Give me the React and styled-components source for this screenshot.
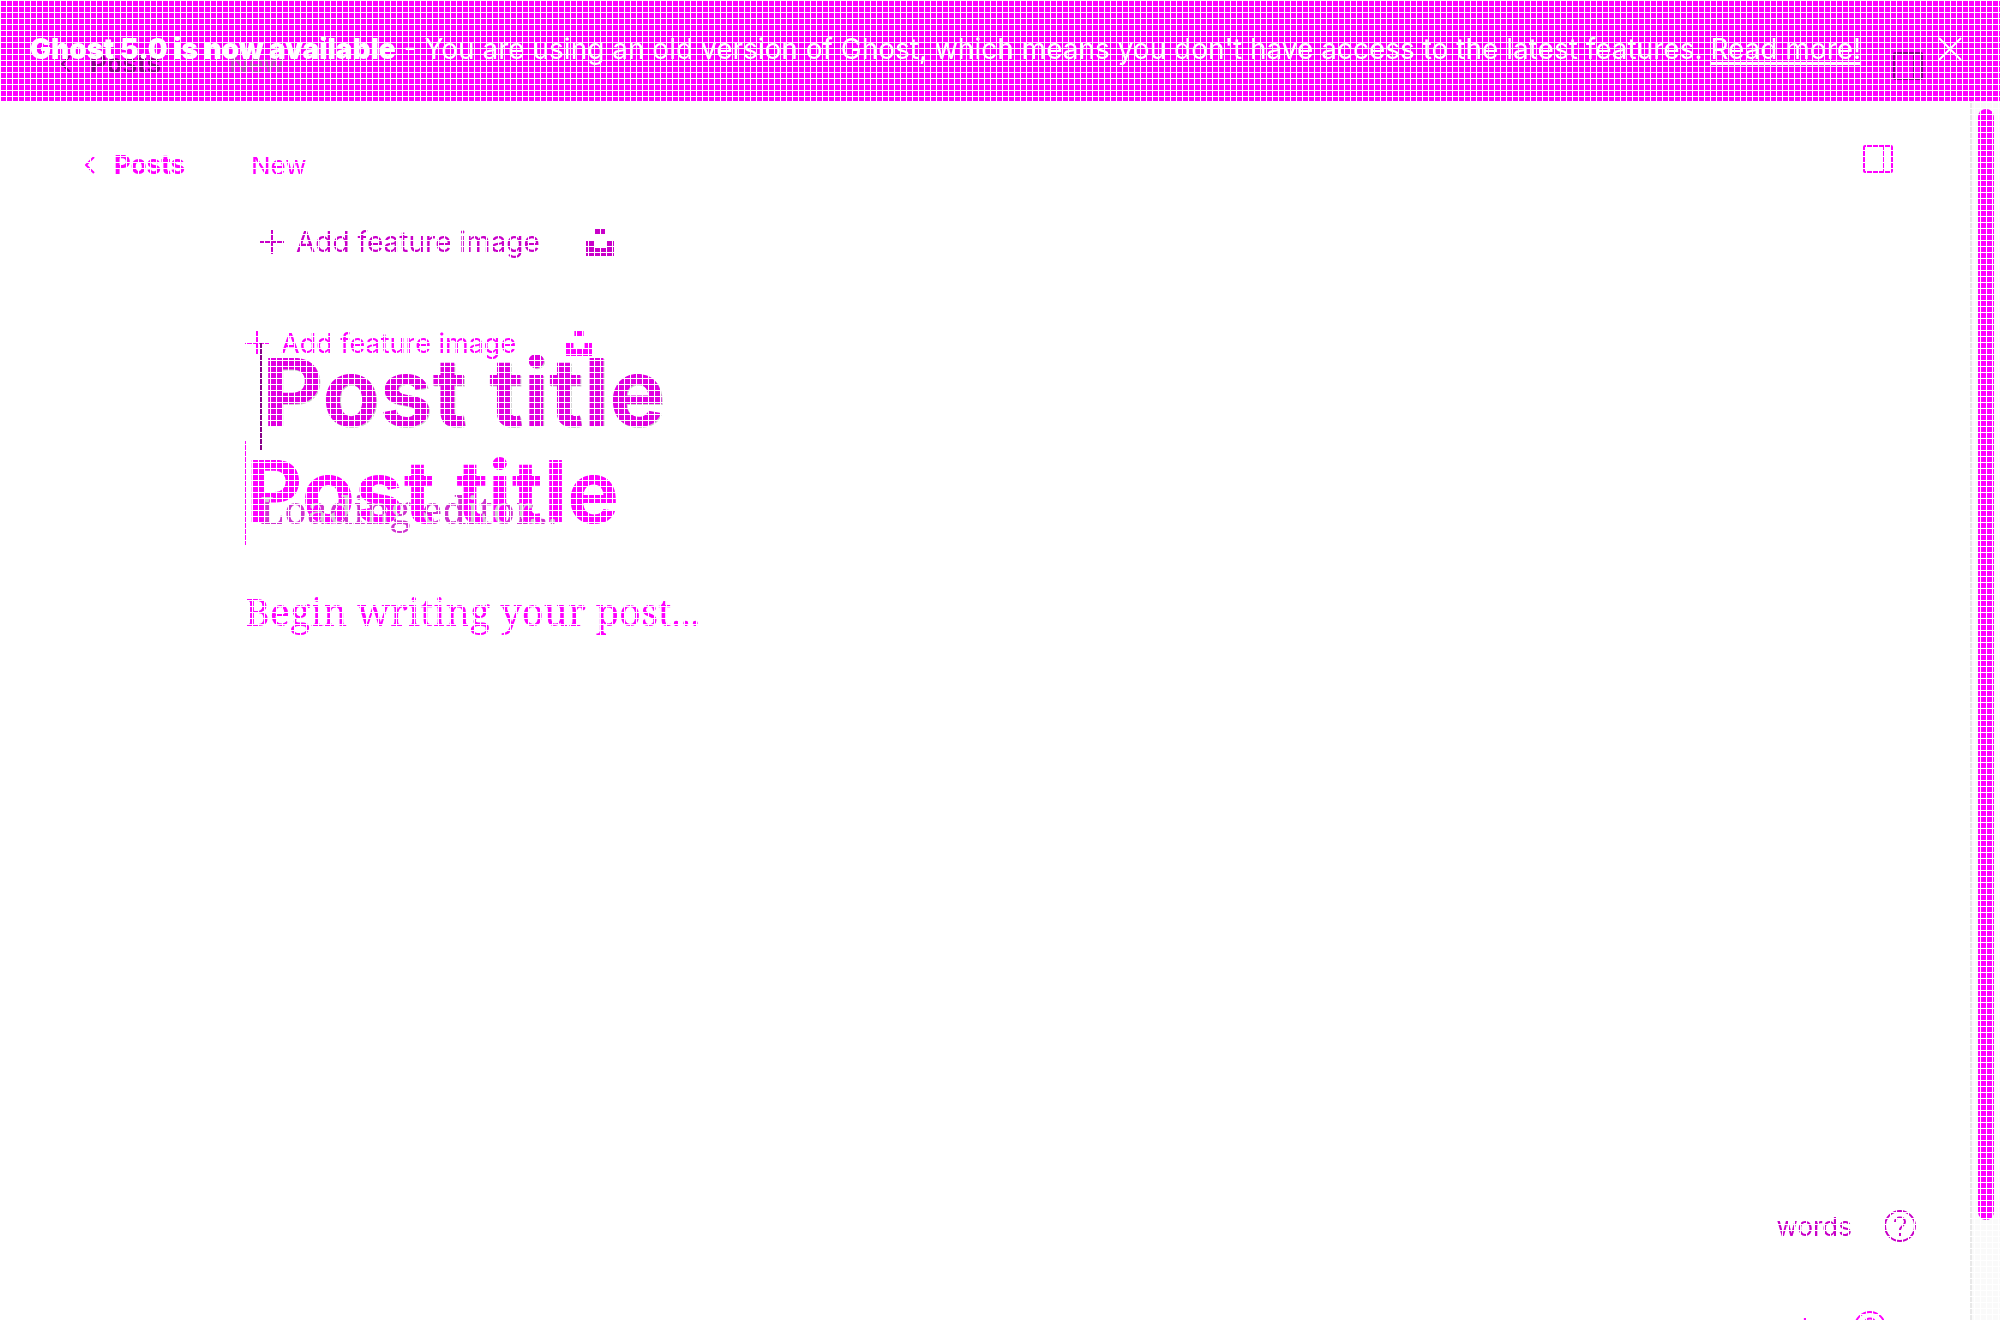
import React from "react";
import styled, { createGlobalStyle, css } from "styled-components";

const GlobalStyle = createGlobalStyle`
  * { box-sizing: border-box; }
  body { margin: 0; background: #fff; font-family: Inter, "Liberation Sans", sans-serif; }
  button, input { font: inherit; color: inherit; border: 0; padding: 0; margin: 0; background: none; outline: 0; }
  svg { display: block; flex: none; }
`;

const Page = styled.div`
  position: relative;
  height: 100vh;
  overflow: hidden;
  display: flex;
  flex-direction: column;
  background: #fff;
`;

const Banner = styled.aside`
  flex: none;
  display: flex;
  align-items: flex-start;
  justify-content: space-between;
  height: 101px;
  padding: 32px 38px 0 30px;
  background: #f0f;
  color: #fff;
  font-size: 28px;
  line-height: 34px;
  white-space: nowrap;
`;

const BannerText = styled.p`
  position: relative;
  z-index: 1;
  margin: 0;

  strong {
    font-weight: 900;
  }
`;

const BannerLink = styled.a`
  color: inherit;
  text-decoration-thickness: 3px;
  text-underline-offset: 3px;
`;

const IconButton = styled.button`
  flex: none;
`;

const CloseButton = styled(IconButton)`
  padding-top: 5px;
`;

const Workspace = styled.div`
  flex: 1;
  min-height: 0;
  display: flex;
`;

const ScrollTrack = styled.div`
  flex: none;
  width: 30px;
  padding: 8px 6px 100px;
  background: #fafafa;
  border-left: 2px solid #e8e8e8;
`;

const ScrollThumb = styled.div`
  width: 16px;
  height: 100%;
  border-radius: 8px;
  background: #f0f;
`;

const current = css`
  --ink: #f0f;
  --strong: #f0f;
  --caret: #f0f;
  --head: #f0f;
  --status: #f0f;
  --left: 245px;
  --action: 27px;
`;

const earlier = css`
  --ink: #c800c8;
  --strong: #e000e0;
  --caret: #880088;
  --head: #880088;
  --status: #b050b0;
  --left: 260px;
  --action: 28px;
  position: absolute;
  inset: 0;
  pointer-events: none;
`;

const Sheet = styled.section`
  flex: 1;
  min-width: 0;
  height: 100vh;
  display: flex;
  flex-direction: column;
  ${(p) => (p.$earlier ? earlier : current)}
`;

const Header = styled.header`
  flex: none;
  display: flex;
  height: 128px;
  padding: 0 77px 0 ${(p) => (p.$earlier ? 60 : 84)}px;
  color: var(--head);
  font-size: 26px;
  line-height: ${(p) => (p.$earlier ? 128 : 130)}px;
`;

const PanelButton = styled(IconButton)`
  align-self: flex-start;
  padding-top: ${(p) => (p.$earlier ? 52 : 44)}px;
`;

const BackLink = styled.a`
  display: flex;
  align-items: center;
  gap: 18px;
  color: inherit;
  font-weight: 700;
  text-decoration: none;
`;

const Status = styled.span`
  flex: 1;
  margin-left: ${(p) => (p.$earlier ? 68 : 66)}px;
  color: var(--status);
`;

const Content = styled.main`
  flex: 1;
  display: flex;
  flex-direction: column;
  padding: 94px 60px 0 var(--left);
`;

const FeatureRow = styled.div`
  display: flex;
  align-items: center;
  gap: ${(p) => (p.$earlier ? 46 : 50)}px;
  height: 40px;
  color: var(--ink);
`;

const AddButton = styled.button`
  display: flex;
  align-items: center;
  gap: 12px;
  font-size: var(--action);
`;

const TitleInput = styled.input`
  && {
    width: 100%;
    height: ${(p) => (p.$earlier ? 108 : 104)}px;
    margin-top: ${(p) => (p.$earlier ? 80 : 78)}px;
    padding-left: 0;
    padding-bottom: ${(p) => (p.$earlier ? 8 : 4)}px;
    border-left: ${(p) => (p.$earlier ? 2 : 1)}px solid var(--caret);
    font-size: ${(p) => (p.$earlier ? 94 : 87)}px;
    font-weight: 700;
  }
  &::placeholder {
    color: var(--strong);
    opacity: 1;
    text-shadow: ${(p) => (p.$earlier ? "1px 1px 0 #ccc" : "none")};
  }
`;

const Body = styled.p`
  margin: ${(p) => (p.$earlier ? 30 : 38)}px 0 0;
  color: var(--ink);
  font-family: "Noto Serif", "Liberation Serif", serif;
  font-size: 38px;
  line-height: 56px;
`;

/* Difference blending turns the loading text grey where it crosses the title and magenta on white. */
const LoadingSheet = styled(Sheet)`
  mix-blend-mode: difference;
`;

const LoadingBody = styled(Body)`
  color: #30cc30;
  font-size: 39px;
`;

const LoadingArea = styled.div`
  flex: 1;
  padding: 451px 60px 0 var(--left);
`;

const Footer = styled.footer`
  flex: none;
  display: flex;
  align-items: center;
  justify-content: flex-end;
  gap: 32px;
  height: 32px;
  margin-bottom: 78px;
  padding-right: 84px;
  color: var(--ink);
  font-size: 26px;
`;

const Mesh = styled.div`
  position: absolute;
  inset: 0;
  pointer-events: none;
  background:
    repeating-linear-gradient(to right, #fff 0 1px, transparent 1px 6px),
    repeating-linear-gradient(to bottom, #fff 0 1px, transparent 1px 6px);
`;

const Chevron = () => (
  <svg width="12" height="18" viewBox="0 0 12 18" fill="none" stroke="currentColor" strokeWidth="2">
    <path d="M10 1 2 9l8 8" />
  </svg>
);

const Panel = () => (
  <svg width="30" height="28" viewBox="0 0 30 28" fill="none" stroke="currentColor" strokeWidth="2">
    <rect x="1" y="1" width="28" height="26" rx="1" />
    <path d="M20.500 1v26" strokeWidth="1" />
  </svg>
);

const Close = () => (
  <svg width="24" height="24" viewBox="0 0 24 24" fill="none" stroke="currentColor" strokeWidth="2">
    <path d="m1 1 22 22M23 1 1 23" />
  </svg>
);

const Plus = () => (
  <svg width="24" height="24" viewBox="0 0 24 24" fill="none" stroke="currentColor" strokeWidth="2">
    <path d="M12 0v24M0 12h24" />
  </svg>
);

const Unsplash = ({ size }) => (
  <svg width={size} height={size} viewBox="0 0 28 28" fill="currentColor">
    <path d="M9 1h10v6H9zM0 13h8v7h12v-7h8v15H0z" />
  </svg>
);

const Help = () => (
  <svg width="32" height="32" viewBox="0 0 32 32" fill="none" stroke="currentColor" strokeWidth="2">
    <circle cx="16" cy="16" r="15" />
    <path d="M11 12c0-6 10-6 10 0 0 4-5 4-5 8M16 23v3" />
  </svg>
);

function Editor({ isEarlier, body }) {
  return (
    <>
      <Header $earlier={isEarlier}>
        <BackLink href="#posts">
          <Chevron />
          Posts
        </BackLink>
        <Status $earlier={isEarlier}>New</Status>
        <PanelButton $earlier={isEarlier} aria-label="Settings">
          <Panel />
        </PanelButton>
      </Header>
      <Content>
        <FeatureRow $earlier={isEarlier}>
          <AddButton>
            <Plus />
            Add feature image
          </AddButton>
          <IconButton aria-label="Unsplash">
            <Unsplash size={isEarlier ? 28 : 26} />
          </IconButton>
        </FeatureRow>
        <TitleInput $earlier={isEarlier} aria-label="Post title" placeholder="Post title" />
        {body && <Body>{body}</Body>}
      </Content>
      <Footer>
        <span>words</span>
        <IconButton aria-label="Help">
          <Help />
        </IconButton>
      </Footer>
    </>
  );
}

export default function App() {
  return (
    <Page>
      <GlobalStyle />
      <Banner>
        <BannerText>
          <strong>Ghost 5.0 is now available</strong> - You are using an old version of Ghost, which
          means you don't have access to the latest features. <BannerLink href="#more">Read more!</BannerLink>
        </BannerText>
        <CloseButton aria-label="Close">
          <Close />
        </CloseButton>
      </Banner>
      <Workspace>
        <Sheet>
          <Editor body="Begin writing your post..." />
        </Sheet>
        <ScrollTrack>
          <ScrollThumb />
        </ScrollTrack>
      </Workspace>
      <Sheet $earlier>
        <Editor isEarlier />
      </Sheet>
      <LoadingSheet $earlier>
        <LoadingArea>
          <LoadingBody $earlier>Loading editor...</LoadingBody>
        </LoadingArea>
      </LoadingSheet>
      <Mesh />
    </Page>
  );
}
